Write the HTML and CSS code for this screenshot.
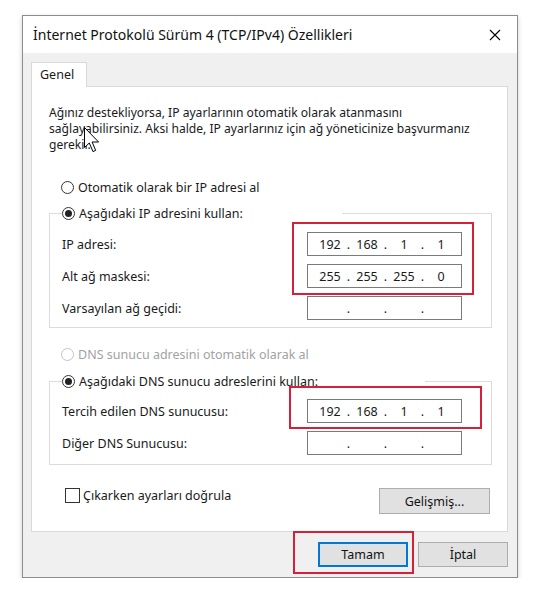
FILE: index.html
```html
<!DOCTYPE html>
<html lang="tr">
<head>
<meta charset="utf-8">
<title>İnternet Protokolü Sürüm 4 (TCP/IPv4) Özellikleri</title>
<link rel="stylesheet" href="styles.css">
</head>
<body>
<div class="page">
  <div class="window">
    <div class="titlebar">
      <span class="title">İnternet Protokolü Sürüm 4 (TCP/IPv4) Özellikleri</span>
      <svg class="close" width="12" height="12" viewBox="0 0 12 12"><path d="M1 1L11 11M11 1L1 11" stroke="#000" stroke-width="1.1" fill="none"/></svg>
    </div>
    <div class="body">
      <div class="tabs"><div class="tab">Genel</div></div>
      <div class="panel">
        <p class="intro">Ağınız destekliyorsa, IP ayarlarının otomatik olarak atanmasını<br>sağlayabilirsiniz. Aksi halde, IP ayarlarınız için ağ yöneticinize başvurmanız<br>gerekir.</p>

        <div class="radio-row first"><span class="radio"></span><span>Otomatik olarak bir IP adresi al</span></div>

        <fieldset class="group group-ip">
          <legend class="legend legend-ip"><span class="radio checked"></span><span>Aşağıdaki IP adresini kullan:</span></legend>
          <div class="rows">
            <div class="row"><span>IP adresi:</span>
              <div class="ip"><span class="oct">192</span><span class="dot">.</span><span class="oct">168</span><span class="dot">.</span><span class="oct">1</span><span class="dot">.</span><span class="oct">1</span></div>
            </div>
            <div class="row"><span>Alt ağ maskesi:</span>
              <div class="ip"><span class="oct">255</span><span class="dot">.</span><span class="oct">255</span><span class="dot">.</span><span class="oct">255</span><span class="dot">.</span><span class="oct">0</span></div>
            </div>
            <div class="row"><span>Varsayılan ağ geçidi:</span>
              <div class="ip"><span class="oct"></span><span class="dot">.</span><span class="oct"></span><span class="dot">.</span><span class="oct"></span><span class="dot">.</span><span class="oct"></span></div>
            </div>
          </div>
          <div class="mark mark-ip"></div>
        </fieldset>

        <div class="radio-row dns-auto"><span class="radio disabled"></span><span>DNS sunucu adresini otomatik olarak al</span></div>

        <fieldset class="group group-dns">
          <legend class="legend legend-dns"><span class="radio checked"></span><span>Aşağıdaki DNS sunucu adreslerini kullan:</span></legend>
          <div class="rows">
            <div class="row"><span>Tercih edilen DNS sunucusu:</span>
              <div class="ip"><span class="oct">192</span><span class="dot">.</span><span class="oct">168</span><span class="dot">.</span><span class="oct">1</span><span class="dot">.</span><span class="oct">1</span></div>
            </div>
            <div class="row"><span>Diğer DNS Sunucusu:</span>
              <div class="ip"><span class="oct"></span><span class="dot">.</span><span class="oct"></span><span class="dot">.</span><span class="oct"></span><span class="dot">.</span><span class="oct"></span></div>
            </div>
          </div>
          <div class="mark mark-dns"></div>
        </fieldset>

        <div class="bottom-row">
          <div class="check-row"><span class="checkbox"></span><span>Çıkarken ayarları doğrula</span></div>
          <button class="btn adv">Gelişmiş...</button>
        </div>
      </div>
      <div class="footer">
        <div class="ok-wrap">
          <button class="btn ok">Tamam</button>
          <div class="mark mark-ok"></div>
        </div>
        <button class="btn">İptal</button>
      </div>
    </div>
    <svg class="cursor" width="17" height="26" viewBox="0 0 17 26"><path d="M0.5 0.5L0.5 20.5L5.3 16L9 24.6L11.7 23.4L8.1 15L14.6 15Z" fill="#fff" stroke="#000" stroke-width="1" stroke-linejoin="miter"/></svg>
  </div>
</div>
</body>
</html>
```
FILE: styles.css
```css
* { box-sizing: border-box; }
html, body { margin: 0; background: #fff; }
body {
  font-family: "Noto Sans", "DejaVu Sans", sans-serif;
  font-size: 12.5px;
  color: #1a1a1a;
}
.page { padding: 15px 0 0 22px; }
.window {
  position: relative;
  width: 496px;
  border: 1px solid #8c8c8c;
  background: #f0f0f0;
  box-shadow: 0 2px 5px rgba(0,0,0,0.18);
}
.titlebar {
  height: 37px;
  background: #fff;
  display: flex;
  align-items: center;
  justify-content: space-between;
  padding: 0 16px 0 10px;
}
.title { font-size: 14px; color: #111; }
.close { display: block; }
.body { padding: 9px 9px 10px 8px; }
.tabs { display: flex; }
.tab {
  position: relative;
  z-index: 1;
  width: 56px;
  height: 25px;
  margin-bottom: -1px;
  padding: 3px 0 0 8px;
  background: #fff;
  border: 1px solid #d9d9d9;
  border-bottom: none;
}
.panel {
  background: #fff;
  border: 1px solid #d9d9d9;
  padding: 18px 15px 17px 17px;
}
.intro { margin: 0; line-height: 16px; font-size: 12.1px; white-space: nowrap; }
.radio-row, .legend, .check-row {
  display: flex;
  align-items: center;
  gap: 4px;
  height: 18px;
}
.radio-row { margin-left: 12px; }
.radio-row.first { margin-top: 25px; }
.radio {
  width: 13px; height: 13px;
  border: 1px solid #333;
  border-radius: 50%;
  background: #fff;
  display: flex; align-items: center; justify-content: center;
  flex: none;
}
.radio.checked::after {
  content: "";
  width: 7px; height: 7px;
  border-radius: 50%;
  background: #222;
}
.radio.disabled { border-color: #c4c4c4; }
.dns-auto { color: #a2a2a2; margin-top: 17px; }
.group {
  position: relative;
  margin: 8px 0 0 0;
  border: 1px solid #dcdcdc;
  padding: 10px 29px 7px 12px;
  min-width: 0;
}
.group-dns { margin-top: 9px; padding-top: 9px; padding-bottom: 9px; }
.legend { padding: 0; }
.legend-ip { width: 280px; }
.legend-dns { width: 363px; }
.rows { display: flex; flex-direction: column; gap: 8px; }
.row {
  display: flex;
  align-items: center;
  justify-content: space-between;
  height: 24px;
}
.ip {
  width: 155px;
  height: 24px;
  border: 1px solid #7a7a7a;
  background: #fff;
  display: flex;
  align-items: center;
  padding-left: 8px;
}
.oct { width: 28px; text-align: center; }
.dot { width: 9px; text-align: center; }
.mark {
  position: absolute;
  border: 2px solid #d6203a;
  pointer-events: none;
}
.mark-ip { left: 242px; top: 0; width: 182px; height: 73px; }
.mark-dns { left: 239px; top: -4px; width: 193px; height: 43px; }
.bottom-row {
  display: flex;
  justify-content: space-between;
  align-items: flex-start;
  margin: 23px 2px 0 0;
}
.check-row { margin: 0 0 0 16px; height: 15px; gap: 3px; }
.checkbox {
  width: 15px; height: 15px;
  border: 1px solid #333;
  background: #fff;
  flex: none;
}
.btn {
  font-family: inherit;
  font-size: 12.5px;
  color: #111;
  width: 90px;
  height: 25px;
  background: #e1e1e1;
  border: 1px solid #adadad;
  padding: 0;
  margin: 0;
}
.adv { width: 111px; height: 26px; }
.footer {
  display: flex;
  justify-content: flex-end;
  gap: 10px;
  padding-top: 10px;
}
.ok-wrap { position: relative; }
.ok { border: 2px solid #0078d7; display: block; }
.mark-ok { left: -25px; top: -11px; width: 121px; height: 43px; }
.cursor {
  position: absolute;
  left: 61px;
  top: 111px;
}
```
